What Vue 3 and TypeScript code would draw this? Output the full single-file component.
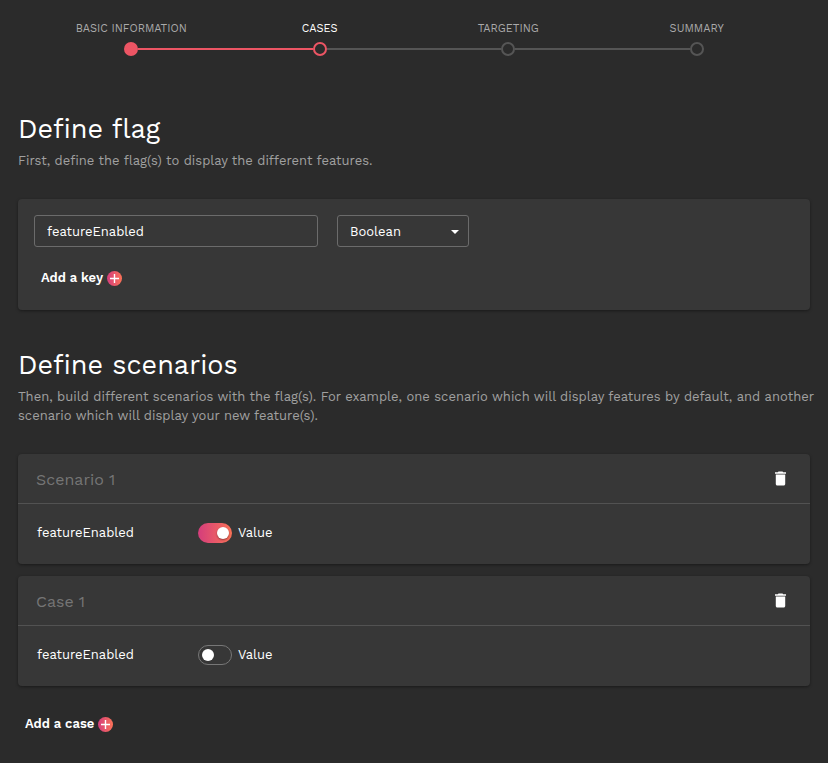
<script setup lang="ts">
import { ref } from 'vue'

type StepState = 'done' | 'current' | 'todo'

interface Step {
  label: string
  state: StepState
}

interface FlagKey {
  id: number
  name: string
  type: string
}

interface Scenario {
  id: number
  name: string
  placeholder: string
  enabled: boolean
}

const steps: Step[] = [
  { label: 'Basic information', state: 'done' },
  { label: 'Cases', state: 'current' },
  { label: 'Targeting', state: 'todo' },
  { label: 'Summary', state: 'todo' },
]

const types = ['Boolean', 'String', 'Number']

const keys = ref<FlagKey[]>([{ id: 1, name: 'featureEnabled', type: 'Boolean' }])

const scenarios = ref<Scenario[]>([
  { id: 1, name: '', placeholder: 'Scenario 1', enabled: true },
  { id: 2, name: '', placeholder: 'Case 1', enabled: false },
])

let nextId = 3

function addKey() {
  keys.value.push({ id: nextId++, name: '', type: 'Boolean' })
}

function addCase() {
  scenarios.value.push({
    id: nextId++,
    name: '',
    placeholder: `Case ${scenarios.value.length}`,
    enabled: false,
  })
}

function removeCase(id: number) {
  scenarios.value = scenarios.value.filter((s) => s.id !== id)
}
</script>

<template>
  <main class="page">
    <ol class="stepper">
      <li v-for="step in steps" :key="step.label" class="step" :class="step.state">
        <span class="step-label">{{ step.label }}</span>
        <span class="track">
          <span class="line before"></span>
          <span class="dot"></span>
          <span class="line after"></span>
        </span>
      </li>
    </ol>

    <section class="section">
      <h1 class="title">Define flag</h1>
      <p class="lead">First, define the flag(s) to display the different features.</p>
      <div class="card keys">
        <div v-for="key in keys" :key="key.id" class="key-row">
          <input v-model="key.name" class="field name" type="text" aria-label="Key name" />
          <span class="select-wrap">
            <select v-model="key.type" class="field type" aria-label="Key type">
              <option v-for="t in types" :key="t">{{ t }}</option>
            </select>
            <svg class="caret" viewBox="0 0 8 4" aria-hidden="true">
              <path d="M0 0h8L4 4z" fill="#fff" />
            </svg>
          </span>
        </div>
        <button class="add" type="button" @click="addKey">
          Add a key
          <span class="plus">
            <svg viewBox="0 0 15 15" aria-hidden="true">
              <path d="M7.5 3v9M3 7.5h9" stroke="#fff" stroke-width="1.4" />
            </svg>
          </span>
        </button>
      </div>
    </section>

    <section class="section">
      <h1 class="title">Define scenarios</h1>
      <p class="lead">
        Then, build different scenarios with the flag(s). For example, one scenario which will
        display features by default, and another scenario which will display your new feature(s).
      </p>
      <div class="scenarios">
        <article v-for="scenario in scenarios" :key="scenario.id" class="card">
          <header class="card-head">
            <input
              v-model="scenario.name"
              class="scenario-name"
              type="text"
              :placeholder="scenario.placeholder"
              aria-label="Scenario name"
            />
            <button
              class="trash"
              type="button"
              aria-label="Delete scenario"
              @click="removeCase(scenario.id)"
            >
              <svg viewBox="5 3 14 18" aria-hidden="true">
                <path
                  d="M6 19c0 1.1.9 2 2 2h8c1.1 0 2-.9 2-2V7H6v12zM19 4h-3.5l-1-1h-5l-1 1H5v2h14V4z"
                  fill="#fff"
                />
              </svg>
            </button>
          </header>
          <div class="card-body">
            <span class="flag-name">featureEnabled</span>
            <label class="toggle">
              <input v-model="scenario.enabled" class="switch" type="checkbox" />
              Value
            </label>
          </div>
        </article>
      </div>
      <button class="add case" type="button" @click="addCase">
        Add a case
        <span class="plus">
          <svg viewBox="0 0 15 15" aria-hidden="true">
            <path d="M7.5 3v9M3 7.5h9" stroke="#fff" stroke-width="1.4" />
          </svg>
        </span>
      </button>
    </section>
  </main>
</template>

<style>
body {
  background: #2b2b2b;
}
</style>

<style scoped>
.page,
.page * {
  box-sizing: border-box;
}

.page {
  padding: 20px 18px 28px;
  color: #fff;
  font-family: 'Work Sans', 'Noto Sans', sans-serif;
  font-size: 13px;
  line-height: 19px;
}

input,
select,
button {
  font: inherit;
  color: inherit;
}

.stepper {
  display: flex;
  margin: 0 0 54px;
  padding: 0 19px;
  list-style: none;
}

.step {
  flex: 1;
  text-align: center;
}

.step-label {
  display: block;
  margin-bottom: 4px;
  color: #aaa;
  font-size: 11px;
  line-height: 18px;
  text-transform: uppercase;
}

.current .step-label {
  color: #fff;
}

.track {
  display: flex;
  align-items: center;
}

.line {
  flex: 1;
  height: 2px;
  background: #555;
}

.dot {
  width: 14px;
  height: 14px;
  border: 2px solid #555;
  border-radius: 50%;
}

.done .line,
.current .before {
  background: #ec5564;
}

.done .dot {
  border-color: #ec5564;
  background: #ec5564;
}

.current .dot {
  border-color: #ec5564;
}

.step:first-child .before,
.step:last-child .after {
  visibility: hidden;
}

.section + .section {
  margin-top: 36px;
}

.title {
  margin: 0;
  font-size: 27px;
  font-weight: 400;
  line-height: 38px;
}

/* Intro text may run slightly past the cards, into the page gutter. */
.lead {
  margin: 3px -8px 29px 0;
  color: #a0a0a0;
}

.card {
  border-radius: 4px;
  background: #373737;
  box-shadow: 0 1px 3px rgba(0, 0, 0, 0.4);
}

.keys {
  padding: 16px 16px 22px;
}

.key-row {
  display: flex;
  gap: 19px;
  margin-bottom: 21px;
}

.field {
  width: 100%;
  height: 32px;
  padding: 0 12px;
  border: 1px solid #6b6b6b;
  border-radius: 3px;
  background: transparent;
  appearance: none;
}

.name {
  flex: 0 1 284px;
  min-width: 0;
}

.select-wrap {
  position: relative;
  flex: 0 0 132px;
}

.type option {
  background: #373737;
}

.caret {
  position: absolute;
  top: 15px;
  right: 10px;
  width: 8px;
  height: 4px;
  pointer-events: none;
}

.add {
  display: inline-flex;
  align-items: center;
  gap: 4px;
  padding: 0 7px;
  border: 0;
  background: none;
  font-weight: 600;
  line-height: 20px;
  cursor: pointer;
}

.add.case {
  margin-top: 28px;
}

.plus {
  display: flex;
  width: 15px;
  height: 15px;
  border-radius: 50%;
  background: linear-gradient(90deg, #d43d7c, #fb7257);
}

.scenarios {
  display: grid;
  gap: 12px;
}

.card-head {
  display: flex;
  align-items: center;
  height: 50px;
  padding: 0 24px 0 18px;
  border-bottom: 1px solid #525252;
}

.scenario-name {
  flex: 1;
  min-width: 0;
  height: 49px;
  padding: 2px 0 0;
  border: 0;
  background: none;
  font-size: 16px;
}

.scenario-name::placeholder {
  color: #757575;
  opacity: 1;
}

.trash {
  display: flex;
  padding: 0;
  border: 0;
  background: none;
  cursor: pointer;
}

.trash svg {
  width: 11px;
  height: 15px;
}

.card-body {
  display: grid;
  grid-template-columns: 161px auto;
  justify-content: start;
  align-items: center;
  height: 60px;
  padding: 0 19px 3px;
}

.toggle {
  display: flex;
  align-items: center;
  gap: 6px;
}

.switch {
  display: flex;
  align-items: center;
  width: 34px;
  height: 20px;
  margin: 0;
  padding: 0 3px;
  border: 1px solid #777;
  border-radius: 10px;
  appearance: none;
  cursor: pointer;
}

.switch::before {
  content: '';
  width: 12px;
  height: 12px;
  border-radius: 50%;
  background: #fff;
}

.switch:checked {
  justify-content: flex-end;
  border: 0;
  background: linear-gradient(90deg, #d43d7c, #fb7257);
}

.switch:checked::before {
  box-shadow: 0 1px 2px rgba(0, 0, 0, 0.4);
}
</style>
